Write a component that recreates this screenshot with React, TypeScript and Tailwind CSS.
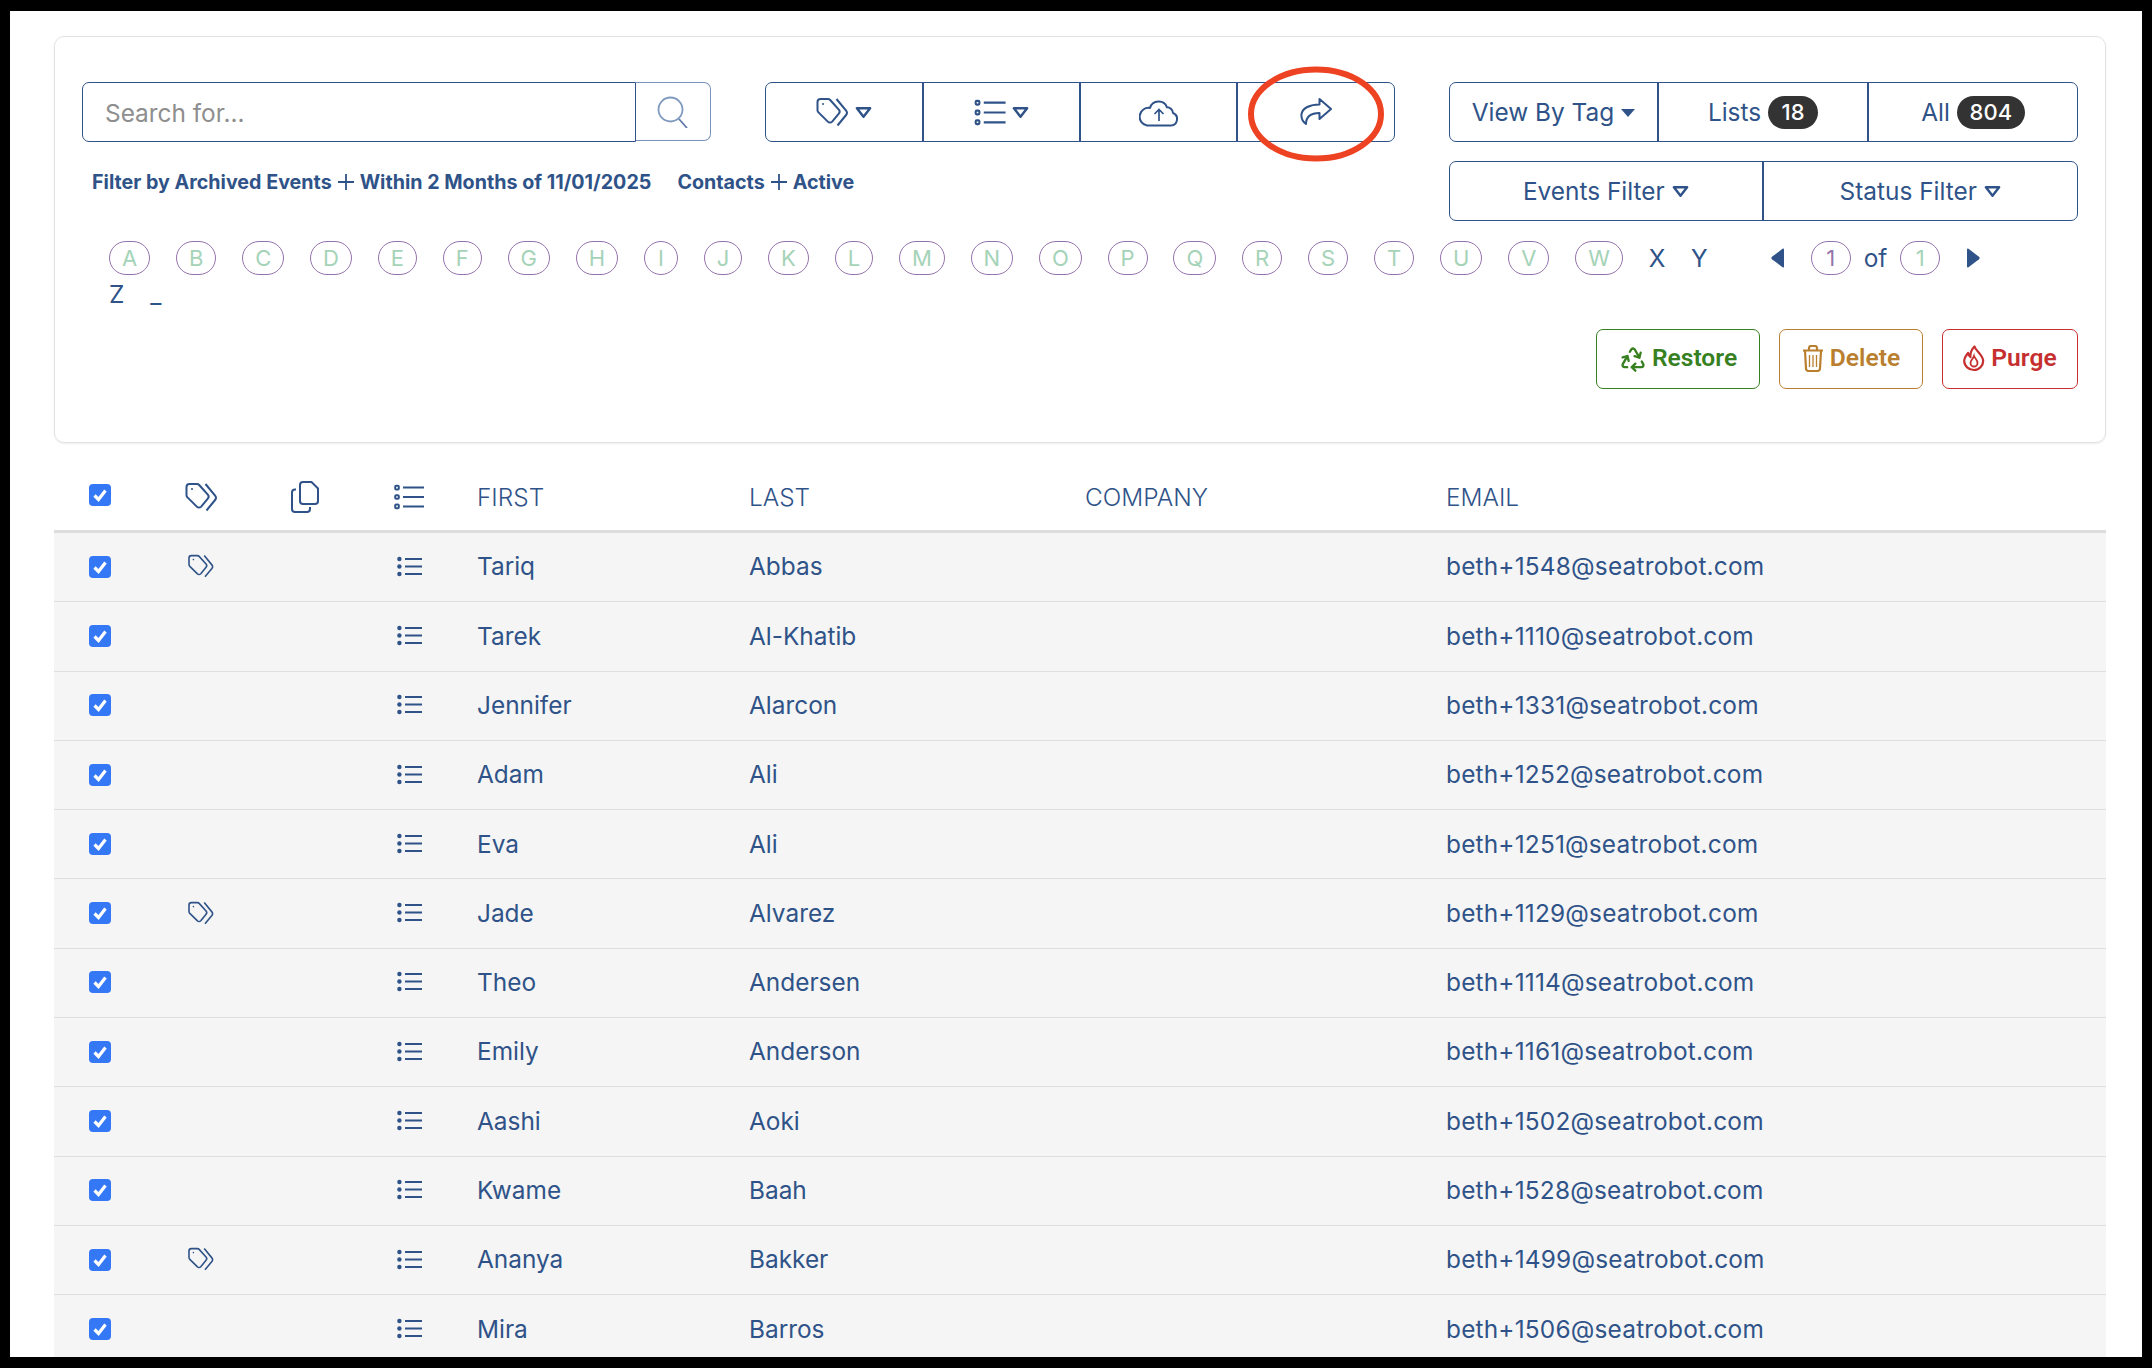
import { Recycle } from 'lucide-react';

const letters = 'ABCDEFGHIJKLMNOPQRSTUVW'.split('');

const contacts = [
  { first: 'Tariq', last: 'Abbas', email: 'beth+1548@seatrobot.com', tag: true },
  { first: 'Tarek', last: 'Al-Khatib', email: 'beth+1110@seatrobot.com', tag: false },
  { first: 'Jennifer', last: 'Alarcon', email: 'beth+1331@seatrobot.com', tag: false },
  { first: 'Adam', last: 'Ali', email: 'beth+1252@seatrobot.com', tag: false },
  { first: 'Eva', last: 'Ali', email: 'beth+1251@seatrobot.com', tag: false },
  { first: 'Jade', last: 'Alvarez', email: 'beth+1129@seatrobot.com', tag: true },
  { first: 'Theo', last: 'Andersen', email: 'beth+1114@seatrobot.com', tag: false },
  { first: 'Emily', last: 'Anderson', email: 'beth+1161@seatrobot.com', tag: false },
  { first: 'Aashi', last: 'Aoki', email: 'beth+1502@seatrobot.com', tag: false },
  { first: 'Kwame', last: 'Baah', email: 'beth+1528@seatrobot.com', tag: false },
  { first: 'Ananya', last: 'Bakker', email: 'beth+1499@seatrobot.com', tag: true },
  { first: 'Mira', last: 'Barros', email: 'beth+1506@seatrobot.com', tag: false },
];

function TagsIcon({ className }: { className: string }) {
  return (
    <svg viewBox="0 0 32 30" fill="none" stroke="currentColor" strokeWidth="2" className={className}>
      <path d="M4 2h7.5a3 3 0 0 1 2.2 1l8.6 9.6a3 3 0 0 1 0 4l-6.6 8a3 3 0 0 1-4.4 0L2 15.4a3 3 0 0 1-1-2.2V5a3 3 0 0 1 3-3z" />
      <circle cx="6.5" cy="7" r="1" fill="currentColor" stroke="none" />
      <path d="M20 2l9.6 11.6a3.5 3.5 0 0 1 0 4.4L21 28.5" />
    </svg>
  );
}

function ListSquareIcon({ className }: { className: string }) {
  return (
    <svg viewBox="0 0 30 26" fill="none" stroke="currentColor" strokeWidth="2" className={className}>
      <rect x="1.2" y="1.8" width="3.6" height="3.6" rx="1" />
      <rect x="1.2" y="11.2" width="3.6" height="3.6" rx="1" />
      <rect x="1.2" y="20.6" width="3.6" height="3.6" rx="1" />
      <path d="M9 3.5h21M9 13h21M9 22.5h21" />
    </svg>
  );
}

function ListDotIcon({ className }: { className: string }) {
  return (
    <svg viewBox="0 0 25 21" fill="none" stroke="currentColor" strokeWidth="2" className={className}>
      <circle cx="2.4" cy="3" r="2.2" fill="currentColor" stroke="none" />
      <circle cx="2.4" cy="10.5" r="2.2" fill="currentColor" stroke="none" />
      <circle cx="2.4" cy="18" r="2.2" fill="currentColor" stroke="none" />
      <path d="M8 3h17M8 10.5h17M8 18h17" />
    </svg>
  );
}

function CopyIcon({ className }: { className: string }) {
  return (
    <svg viewBox="0 0 28 32" fill="none" stroke="currentColor" strokeWidth="2" className={className}>
      <path d="M12 1h8.5L27 7.5V20a3 3 0 0 1-3 3H12a3 3 0 0 1-3-3V4a3 3 0 0 1 3-3z" />
      <path d="M5 8.5H4a3 3 0 0 0-3 3V28a3 3 0 0 0 3 3h12a3 3 0 0 0 3-3v-2" />
    </svg>
  );
}

function CloudIcon({ className }: { className: string }) {
  return (
    <svg viewBox="0 -1 40 29" fill="none" stroke="currentColor" strokeWidth="2" className={className}>
      <path d="M8 26.500H32A6.500 6.500 0 0 0 34 14A6 6 0 0 0 28 8.300A9 9 0 0 0 11 9A8.500 8.500 0 0 0 8 26.500z" strokeLinejoin="round" />
      <path d="M20 22V10.500M15.500 15L20 10.500l4.500 4.500" strokeWidth="1.700" />
    </svg>
  );
}

function ShareIcon({ className }: { className: string }) {
  return (
    <svg viewBox="0 0 32 28" fill="none" stroke="currentColor" strokeWidth="2" strokeLinejoin="round" className={className}>
      <path d="M19.500 1L31 11 19.500 21v-6C12 15 6 17 6 26 2 23 1 20 1.500 16 2.500 10 10 6.500 19.500 6.500z" />
    </svg>
  );
}

function TrashIcon({ className }: { className: string }) {
  return (
    <svg viewBox="0 0 22 27" fill="none" stroke="currentColor" strokeWidth="2.200" className={className}>
      <path d="M1 5.500h20M7 5V3a2 2 0 0 1 2-2h4a2 2 0 0 1 2 2v2" />
      <path d="M3 6l1 17.500a2.500 2.500 0 0 0 2.500 2.500h9a2.500 2.500 0 0 0 2.500-2.500L19 6" />
      <path d="M7.500 10v12M11 10v12M14.500 10v12" strokeWidth="1.300" />
    </svg>
  );
}

function FlameIcon({ className }: { className: string }) {
  return (
    <svg viewBox="0 0 22 27" fill="none" stroke="currentColor" strokeWidth="2.200" className={className}>
      <path d="M11.500 1.500c1 4 7 7 8.500 13 1 6-4 10.500-9 10.500S1 21 1.200 15.500C1.400 12 3.500 10 5 8c.5 2 1 3 2.500 4C7 8 9 4 11.500 1.500z" strokeLinejoin="round" />
      <path d="M11 11c.5 2 3.500 3.500 3.500 7 0 2-1.700 3.500-3.500 3.500S7.500 20 7.500 18c0-2.500 2.500-4 3.500-7z" strokeWidth="1.800" />
    </svg>
  );
}

function CaretOutline() {
  return (
    <svg viewBox="0 0 18 13" fill="none" stroke="currentColor" strokeWidth="2.600" strokeLinejoin="round" className="w-[17px] h-[13px]">
      <path d="M2 2h14L9 11z" />
    </svg>
  );
}

function PlusIcon() {
  return (
    <svg viewBox="0 0 16 16" fill="none" stroke="currentColor" strokeWidth="1.800" className="w-[16px] h-[16px]">
      <path d="M8 0v16M0 8h16" />
    </svg>
  );
}

function Check() {
  return (
    <div className="w-[22px] h-[22px] rounded-[4px] bg-[#3478f6] flex items-center justify-center">
      <svg viewBox="0 0 22 22" fill="none" stroke="#fff" strokeWidth="3.200" className="w-[22px] h-[22px]">
        <path d="M5.500 11.500l4 4 7-9" />
      </svg>
    </div>
  );
}

function Letter({ children, color = 'text-[#a5d3b8]', className = 'px-[12px] min-w-[34px]' }: { children: string; color?: string; className?: string }) {
  return (
    <span className={`h-[34px] rounded-full border border-[#9473ab] flex items-center justify-center text-[22px] leading-none ${color} ${className}`}>
      {children}
    </span>
  );
}

const rowGrid = 'grid grid-cols-[96px_102px_106px_102px_289px_336px_361px_1fr] items-center';

export default function App() {
  return (
    <div className="h-[1368px] bg-black pt-[11px] pb-[11px] px-[10px] font-['Inter',sans-serif] text-[#2f5388]">
      <div className="relative h-full bg-white overflow-hidden pt-[25px] pl-[44px] pr-[36px]">
        {/* Filter card */}
        <div className="h-[407px] rounded-[10px] border border-[#e3e3e3] shadow-[0_1px_2px_rgba(0,0,0,0.08)] pt-[45px] pl-[27px] pr-[27px]">
          <div className="flex justify-between">
            <div>
              <div className="flex">
                <div className="flex w-[629px] h-[60px]">
                  <div className="w-[554px] h-[60px] rounded-l-[7px] border border-[#2f5388] flex items-center pl-[22px] pt-[2px] text-[24.4px] text-[#8e8e8e]">
                    Search for...
                  </div>
                  <div className="flex-1 h-[59px] rounded-r-[7px] border border-l-0 border-[#7b93b8] flex items-center justify-center">
                    <svg viewBox="0 0 32 32" fill="none" stroke="#7f99bf" strokeWidth="1.800" className="w-[32px] h-[32px]">
                      <circle cx="13.500" cy="13.500" r="12" />
                      <path d="M22 23l8 9" stroke="#5f7ca8" />
                    </svg>
                  </div>
                </div>
                <div className="ml-[54px] w-[630px] h-[60px] rounded-[7px] border border-[#2f5388] grid grid-cols-[158px_157px_157px_1fr]">
                  <div className="flex items-center justify-center gap-[6px] border-r-2 border-[#2f5388]">
                    <TagsIcon className="w-[33px] h-[30px]" />
                    <CaretOutline />
                  </div>
                  <div className="flex items-center justify-center gap-[6px] border-r-2 border-[#2f5388]">
                    <ListSquareIcon className="w-[32px] h-[27px]" />
                    <CaretOutline />
                  </div>
                  <div className="flex items-center justify-center border-r-2 border-[#2f5388]">
                    <CloudIcon className="w-[40px] h-[29px]" />
                  </div>
                  <div className="flex items-center justify-center">
                    <ShareIcon className="w-[32px] h-[28px]" />
                  </div>
                </div>
              </div>
              <div className="mt-[28px] pl-[10px] flex items-center text-[19.7px] font-bold leading-[24px]">
                <span>Filter by Archived Events</span>
                <span className="mx-[6px]"><PlusIcon /></span>
                <span>Within 2 Months of 11/01/2025</span>
                <span className="ml-[26px]">Contacts</span>
                <span className="mx-[6px]"><PlusIcon /></span>
                <span>Active</span>
              </div>
            </div>
            <div className="w-[629px] flex flex-col gap-[19px] text-[24.4px]">
              <div className="h-[60px] rounded-[7px] border border-[#2f5388] grid grid-cols-[209px_210px_1fr]">
                <div className="flex items-center justify-center gap-[7px] pt-[1px] border-r-2 border-[#2f5388]">
                  View By Tag
                  <svg viewBox="0 0 14 8" className="w-[14px] h-[8px] fill-current"><path d="M0 0h14L7 8z" /></svg>
                </div>
                <div className="flex items-center justify-center gap-[7px] pt-[1px] border-r-2 border-[#2f5388]">
                  Lists
                  <span className="w-[50px] h-[33px] rounded-full bg-[#333333] text-white text-[22px] font-medium flex items-center justify-center">18</span>
                </div>
                <div className="flex items-center justify-center gap-[7px] pt-[1px]">
                  All
                  <span className="w-[68px] h-[33px] rounded-full bg-[#333333] text-white text-[22px] font-medium flex items-center justify-center">804</span>
                </div>
              </div>
              <div className="h-[60px] rounded-[7px] border border-[#2f5388] grid grid-cols-2">
                <div className="flex items-center justify-center gap-[7px] pt-[1px] border-r-2 border-[#2f5388]">
                  Events Filter
                  <CaretOutline />
                </div>
                <div className="flex items-center justify-center gap-[7px] pt-[1px]">
                  Status Filter
                  <CaretOutline />
                </div>
              </div>
            </div>
          </div>

          {/* Alphabet + pager */}
          <div className="mt-[19px] pl-[27px] flex items-center text-[24.4px]">
            <div className="flex items-center gap-[25.8px]">
              {letters.map((l) => (
                <Letter key={l}>{l}</Letter>
              ))}
              <span>X</span>
              <span>Y</span>
            </div>
            <div className="ml-[63px] flex items-center">
              <svg viewBox="0 0 13 20" className="w-[13px] h-[20px] fill-current"><path d="M13 1.500v17q0 1.500-1.500.7L1 11.200q-1.300-1.200 0-2.400L11.500.8Q13 0 13 1.500z" /></svg>
              <Letter color="text-[#9473ab]" className="ml-[27px] w-[40px]">1</Letter>
              <span className="mx-[13px]">of</span>
              <Letter className="w-[40px]">1</Letter>
              <svg viewBox="0 0 13 20" className="ml-[27px] w-[13px] h-[20px] fill-current"><path d="M0 1.500v17q0 1.500 1.500.7L12 11.200q1.300-1.200 0-2.400L1.500.8Q0 0 0 1.500z" /></svg>
            </div>
          </div>
          <div className="pl-[27px] flex items-center gap-[26px] text-[24.4px] leading-[29px] mt-[3px]">
            <span>Z</span>
            <span>_</span>
          </div>

          {/* Bulk actions */}
          <div className="mt-[20px] flex justify-end gap-[19px] font-['Roboto',sans-serif] font-semibold text-[24.6px]">
            <div className="w-[164px] h-[60px] rounded-[7px] border border-[#37801f] text-[#37801f] flex items-center justify-center gap-[5px]">
              <Recycle className="w-[28px] h-[28px]" strokeWidth={2} />
              Restore
            </div>
            <div className="w-[144px] h-[60px] rounded-[7px] border border-[#b97f2e] text-[#b97f2e] flex items-center justify-center gap-[6px]">
              <TrashIcon className="w-[22px] h-[27px]" />
              Delete
            </div>
            <div className="w-[136px] h-[60px] rounded-[7px] border border-[#c62f2f] text-[#c62f2f] flex items-center justify-center gap-[6px]">
              <FlameIcon className="w-[22px] h-[27px]" />
              Purge
            </div>
          </div>
        </div>

        {/* Contacts table */}
        <div className={`${rowGrid} mt-[20px] h-[70px] border-b-[3px] border-[#dddddd] text-[24.4px] font-light`}>
          <div className="pl-[35px] pb-[3px]"><Check /></div>
          <div className="flex justify-center"><TagsIcon className="w-[33px] h-[30px]" /></div>
          <div className="flex justify-center"><CopyIcon className="w-[28px] h-[32px]" /></div>
          <div className="flex justify-center"><ListSquareIcon className="w-[30px] h-[26px]" /></div>
          <div className="pl-[17px] pt-[1px]">FIRST</div>
          <div className="pt-[1px]">LAST</div>
          <div className="pt-[1px]">COMPANY</div>
          <div className="pt-[1px]">EMAIL</div>
        </div>
        {contacts.map((c) => (
          <div key={c.email} className={`${rowGrid} h-[69.3px] bg-[#f5f5f5] border-b border-[#dedede] text-[24.4px]`}>
            <div className="pl-[35px] pb-[1px]"><Check /></div>
            <div className="flex justify-center pb-[2px]">{c.tag && <TagsIcon className="w-[26px] h-[24px]" />}</div>
            <div />
            <div className="flex justify-center pb-[2px]"><ListDotIcon className="w-[25px] h-[21px]" /></div>
            <div className="pl-[17px] pb-[1px]">{c.first}</div>
            <div className="pb-[1px]">{c.last}</div>
            <div />
            <div className="pb-[1px] tracking-[0.2px]">{c.email}</div>
          </div>
        ))}

        {/* Red annotation ring round the share button */}
        <svg viewBox="0 0 140 96" fill="none" className="absolute left-[1236px] top-[55px] w-[140px] h-[96px]">
          <ellipse cx="70" cy="48" rx="65" ry="44.500" stroke="#ee4323" strokeWidth="6" />
        </svg>
      </div>
    </div>
  );
}
